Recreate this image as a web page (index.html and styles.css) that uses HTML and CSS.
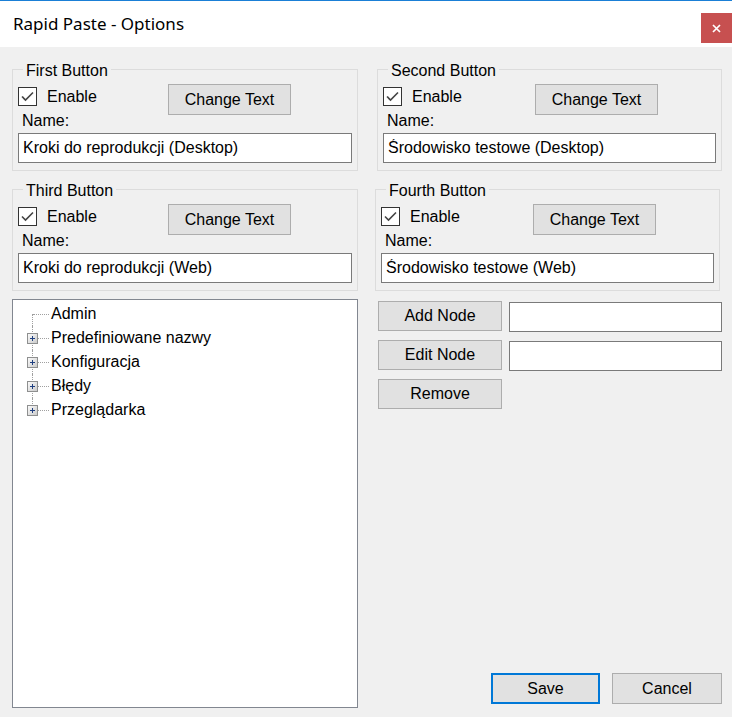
FILE: index.html
```html
<!DOCTYPE html>
<html lang="pl">
<head>
<meta charset="utf-8">
<title>Rapid Paste - Options</title>
<link rel="stylesheet" href="styles.css">
</head>
<body>
<div class="window">
  <header class="titlebar">
    <span class="title">Rapid Paste - Options</span>
    <button class="close" aria-label="Close">
      <svg width="9" height="9" viewBox="0 0 9 9"><path d="M1 1L8 8M8 1L1 8" stroke="#fff" stroke-width="1.7" fill="none"/></svg>
    </button>
  </header>
  <main class="client">
    <section class="groups">
      <div class="group">
        <div class="legend">First Button</div>
        <div class="group-row">
          <label class="check"><span class="box"><svg width="19" height="19" viewBox="0 0 19 19"><rect x="0.5" y="0.5" width="18" height="18" fill="#fff" stroke="#333"/><path d="M4 9.5l3.5 3.5l7.5-7.5" fill="none" stroke="#444" stroke-width="1.6"/></svg></span>Enable</label>
          <button class="btn btn-change">Change Text</button>
        </div>
        <div class="name-label">Name:</div>
        <input class="textbox" type="text" value="Kroki do reprodukcji (Desktop)">
      </div>
      <div class="group group-right">
        <div class="legend">Second Button</div>
        <div class="group-row">
          <label class="check"><span class="box"><svg width="19" height="19" viewBox="0 0 19 19"><rect x="0.5" y="0.5" width="18" height="18" fill="#fff" stroke="#333"/><path d="M4 9.5l3.5 3.5l7.5-7.5" fill="none" stroke="#444" stroke-width="1.6"/></svg></span>Enable</label>
          <button class="btn btn-change">Change Text</button>
        </div>
        <div class="name-label">Name:</div>
        <input class="textbox" type="text" value="Środowisko testowe (Desktop)">
      </div>
      <div class="group">
        <div class="legend">Third Button</div>
        <div class="group-row">
          <label class="check"><span class="box"><svg width="19" height="19" viewBox="0 0 19 19"><rect x="0.5" y="0.5" width="18" height="18" fill="#fff" stroke="#333"/><path d="M4 9.5l3.5 3.5l7.5-7.5" fill="none" stroke="#444" stroke-width="1.6"/></svg></span>Enable</label>
          <button class="btn btn-change">Change Text</button>
        </div>
        <div class="name-label">Name:</div>
        <input class="textbox" type="text" value="Kroki do reprodukcji (Web)">
      </div>
      <div class="group group-right group-shift">
        <div class="legend">Fourth Button</div>
        <div class="group-row">
          <label class="check"><span class="box"><svg width="19" height="19" viewBox="0 0 19 19"><rect x="0.5" y="0.5" width="18" height="18" fill="#fff" stroke="#333"/><path d="M4 9.5l3.5 3.5l7.5-7.5" fill="none" stroke="#444" stroke-width="1.6"/></svg></span>Enable</label>
          <button class="btn btn-change">Change Text</button>
        </div>
        <div class="name-label">Name:</div>
        <input class="textbox" type="text" value="Środowisko testowe (Web)">
      </div>
    </section>

    <section class="lower">
      <div class="tree">
        <div class="node first"><span class="conn"></span><span class="label">Admin</span></div>
        <div class="node"><span class="conn"><svg class="plus" width="11" height="11" viewBox="0 0 11 11"><defs><linearGradient id="pg1" x1="0" y1="0" x2="1" y2="1"><stop offset="0" stop-color="#fdfdfd"/><stop offset="1" stop-color="#c9c9c9"/></linearGradient></defs><rect x="0.5" y="0.5" width="10" height="10" fill="url(#pg1)" stroke="#8e8f8f"/><path d="M3 5.5h5M5.5 3v5" stroke="#1f3f80"/></svg></span><span class="label">Predefiniowane nazwy</span></div>
        <div class="node"><span class="conn"><svg class="plus" width="11" height="11" viewBox="0 0 11 11"><defs><linearGradient id="pg2" x1="0" y1="0" x2="1" y2="1"><stop offset="0" stop-color="#fdfdfd"/><stop offset="1" stop-color="#c9c9c9"/></linearGradient></defs><rect x="0.5" y="0.5" width="10" height="10" fill="url(#pg2)" stroke="#8e8f8f"/><path d="M3 5.5h5M5.5 3v5" stroke="#1f3f80"/></svg></span><span class="label">Konfiguracja</span></div>
        <div class="node"><span class="conn"><svg class="plus" width="11" height="11" viewBox="0 0 11 11"><defs><linearGradient id="pg3" x1="0" y1="0" x2="1" y2="1"><stop offset="0" stop-color="#fdfdfd"/><stop offset="1" stop-color="#c9c9c9"/></linearGradient></defs><rect x="0.5" y="0.5" width="10" height="10" fill="url(#pg3)" stroke="#8e8f8f"/><path d="M3 5.5h5M5.5 3v5" stroke="#1f3f80"/></svg></span><span class="label">Błędy</span></div>
        <div class="node last"><span class="conn"><svg class="plus" width="11" height="11" viewBox="0 0 11 11"><defs><linearGradient id="pg4" x1="0" y1="0" x2="1" y2="1"><stop offset="0" stop-color="#fdfdfd"/><stop offset="1" stop-color="#c9c9c9"/></linearGradient></defs><rect x="0.5" y="0.5" width="10" height="10" fill="url(#pg4)" stroke="#8e8f8f"/><path d="M3 5.5h5M5.5 3v5" stroke="#1f3f80"/></svg></span><span class="label">Przeglądarka</span></div>
      </div>
      <div class="side">
        <div class="node-row"><button class="btn btn-node">Add Node</button><input class="textbox node-input" type="text" value=""></div>
        <div class="node-row"><button class="btn btn-node">Edit Node</button><input class="textbox node-input" type="text" value=""></div>
        <div class="node-row"><button class="btn btn-node">Remove</button></div>
        <div class="dialog-buttons">
          <button class="btn btn-save">Save</button>
          <button class="btn btn-cancel">Cancel</button>
        </div>
      </div>
    </section>
  </main>
</div>
</body>
</html>
```

FILE: styles.css
```css
* { box-sizing: border-box; }

html, body {
  margin: 0;
  padding: 0;
}

body {
  width: 732px;
  height: 717px;
  overflow: hidden;
  font-family: "Liberation Sans", Arial, sans-serif;
  font-size: 16px;
  color: #000;
  background: #f0f0f0;
}

.window {
  width: 732px;
  height: 717px;
  display: flex;
  flex-direction: column;
}

.titlebar {
  height: 47px;
  border-top: 1px solid #1a7fd6;
  background: #fff;
  display: flex;
  justify-content: space-between;
  align-items: flex-start;
  flex: none;
}

.title {
  font-family: "Noto Sans", "Open Sans", sans-serif;
  font-size: 17px;
  line-height: 24px;
  margin: 11px 0 0 13px;
  color: #000;
}

.close {
  margin-top: 12px;
  width: 31px;
  height: 30px;
  border: 0;
  padding: 0;
  background: #c75050;
  display: flex;
  align-items: center;
  justify-content: center;
}

.client {
  flex: 1;
  min-height: 0;
  display: flex;
  flex-direction: column;
  padding: 22px 10px 9px 12px;
  background: #f0f0f0;
}

.groups {
  display: grid;
  grid-template-columns: 346px 345px;
  column-gap: 19px;
  row-gap: 18px;
}

.group {
  border: 1px solid #dcdcdc;
  padding: 0 5px 7px;
  height: 102px;
  min-width: 0;
}

.group-shift {
  margin-left: -2px;
  margin-right: 2px;
}

.legend {
  margin: -8px 0 0 5px;
  padding: 0 3px;
  width: fit-content;
  line-height: 18px;
  background: #f0f0f0;
}

.group-row {
  display: flex;
  align-items: flex-start;
  margin-top: 4px;
  height: 31px;
}

.check {
  width: 150px;
  flex: none;
  display: flex;
  align-items: center;
  gap: 10px;
  margin-top: 3px;
  line-height: 19px;
}

.group-right .check {
  width: 152px;
}

.box {
  display: block;
  width: 19px;
  height: 19px;
}

.box svg { display: block; }

.btn {
  font-family: "Liberation Sans", Arial, sans-serif;
  font-size: 16px;
  color: #000;
  background: #e1e1e1;
  border: 1px solid #adadad;
  padding: 0;
  margin: 0;
  display: flex;
  align-items: center;
  justify-content: center;
}

.btn-change {
  width: 123px;
  height: 31px;
  flex: none;
}

.name-label {
  line-height: 12px;
  padding-left: 4px;
}

.textbox {
  display: block;
  width: 100%;
  min-width: 0;
  height: 30px;
  margin: 6px 0 0;
  padding: 0 4px 1px;
  border: 1px solid #7a7a7a;
  background: #fff;
  font-family: "Liberation Sans", Arial, sans-serif;
  font-size: 16px;
  color: #000;
  outline: none;
}

.lower {
  flex: 1;
  min-height: 0;
  display: flex;
  margin-top: 8px;
}

.tree {
  width: 346px;
  flex: none;
  background: #fff;
  border: 1px solid #828790;
  padding: 2px 0 0 14px;
}

.node {
  height: 24px;
  display: flex;
  align-items: center;
}

.conn {
  position: relative;
  width: 24px;
  height: 24px;
  flex: none;
}

.conn::before {
  content: "";
  position: absolute;
  left: 5px;
  top: 0;
  bottom: 0;
  border-left: 1px dotted #a0a0a0;
}

.node.first .conn::before { top: 12px; }
.node.last .conn::before { bottom: 12px; }

.conn::after {
  content: "";
  position: absolute;
  left: 6px;
  top: 12px;
  width: 16px;
  border-top: 1px dotted #a0a0a0;
}

.plus {
  position: absolute;
  left: 0;
  top: 7px;
  z-index: 1;
  display: block;
}

.label {
  line-height: 24px;
  white-space: nowrap;
}

.side {
  flex: 1;
  min-width: 0;
  margin-left: 20px;
  display: flex;
  flex-direction: column;
  padding-top: 2px;
}

.node-row {
  display: flex;
  align-items: flex-start;
  gap: 7px;
  margin-bottom: 8px;
}

.btn-node {
  width: 124px;
  height: 30px;
  flex: none;
}

.node-input {
  margin-top: 1px;
  flex: 1 1 0;
  width: 0;
}

.dialog-buttons {
  margin-top: auto;
  margin-bottom: 4px;
  display: flex;
  justify-content: flex-end;
  gap: 12px;
}

.btn-save {
  width: 109px;
  height: 31px;
  border: 2px solid #0078d7;
}

.btn-cancel {
  width: 110px;
  height: 31px;
}
```
